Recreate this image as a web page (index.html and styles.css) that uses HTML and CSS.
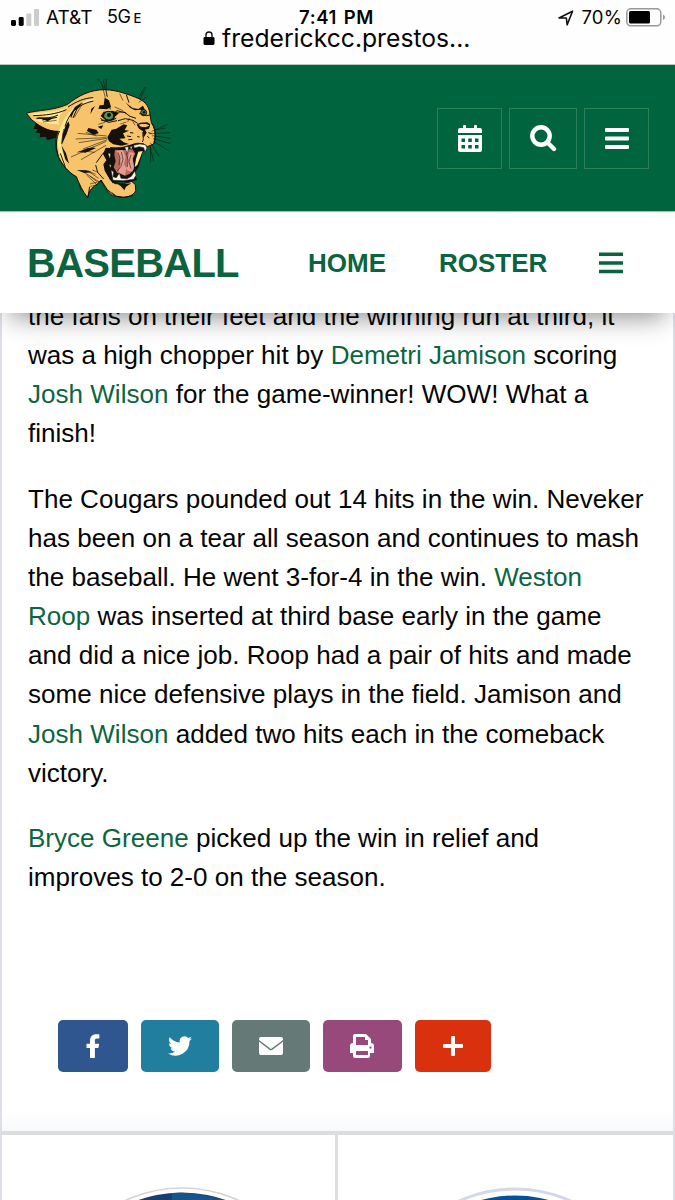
FILE: index.html
```html
<!DOCTYPE html>
<html lang="en">
<head>
<meta charset="utf-8">
<title>Frederick CC Baseball</title>
<link rel="stylesheet" href="styles.css">
</head>
<body>
<div class="screen">
  <div class="phone-bar">
    <div class="status">
      <div class="carrier">
        <svg class="signal" viewBox="0 0 28 18"><rect x="0" y="11" width="5" height="6" rx="1.4"/><rect x="7.7" y="8" width="5" height="9" rx="1.4"/><rect class="weak" x="15.3" y="4.5" width="5" height="12.5" rx="1"/><rect class="weak" x="23" y="0" width="5" height="17" rx="1"/></svg>
        <span class="carrier-name">AT&amp;T</span><span class="network">5G<small>E</small></span>
      </div>
      <div class="clock">7:41 PM</div>
      <div class="power">
        <svg class="locate" viewBox="0 0 16 16"><path d="M1 8 14.5 1.2 9.2 14.8 8.3 8Z"/></svg>
        <span class="percent">70%</span>
        <svg class="battery" viewBox="0 0 40 19"><rect class="shell" x=".8" y=".8" width="34" height="17" rx="4"/><rect x="3" y="3" width="21" height="12.6" rx="1.5"/><path class="cap" d="M37 6.500c2.600 1.200 2.600 4.400 0 5.600z"/></svg>
      </div>
    </div>
    <div class="address">
      <svg class="lock" viewBox="0 0 12 14"><rect x=".5" y="6" width="11" height="8" rx="1.4"/><path d="M3 6V4a3 3 0 0 1 6 0v2"/></svg>
      <span>frederickcc.prestos...</span>
    </div>
  </div>

  <header class="site-header">
    <svg class="cougar" viewBox="0 0 510 420" role="img" aria-label="Cougar">
      <path class="ink" d="M62 160 56 176 68 178 62 188 76 190 74 202 92 200 96 211 128 202 134 184 110 150Z"/>
      <path class="fur" d="M34 130C70 119 112 123 158 103 190 77 225 59 270 59 306 60 342 74 362 82 388 91 402 108 404 128L409 158C421 172 424 200 416 222L397 230 385 221 355 224 330 234 289 234 266 248 278 270 274 292 285 328 300 341 326 341 350 334 361 344 362 362C356 376 340 382 322 382 302 380 294 377 286 372 274 360 263 344 258 330 246 348 224 348 218 383 202 363 193 342 184 320 160 307 142 285 130 260L122 230 124 198 130 184C95 185 66 163 49 148Z"/>
      <path class="cream" d="M38 131C80 126 130 128 166 107 146 119 126 135 132 164 112 160 80 162 49 146L90 150 126 146Z"/>
      <path class="cream" d="M236 85C180 98 145 135 130 192 124 240 138 274 157 294 139 245 133 210 153 170 168 126 190 104 236 91Z"/>
      <path class="line" d="M130 260C122 230 122 205 134 183M159 111C184 95 207 84 235 83M235 93C188 103 162 129 150 169M55 137C92 136 125 132 154 119M64 146C94 143 112 144 129 135M82 150 126 142M136 250 151 290M190 107 174 144"/>
      <path class="thin" d="M204 99 178 142M146 177 139 222M158 178 152 196M84 156 125 151"/>
      <path class="ink" d="M180 111 203 96 191 114 178 122 168 145 165 134ZM151 169 160 154 164 166 151 200 140 225 143 192ZM139 226 153 250 162 281 151 268ZM64 141 98 145 119 142 98 154ZM240 108 226 133 229 116ZM269 83 282 91 288 111 276 118 250 116 254 106 266 105ZM331 96 340 104 353 114 370 117 384 107 394 128 378 119 360 121 345 113ZM257 138 266 125 292 122 312 129 300 140 297 150 274 153Z"/>
      <ellipse class="eye" cx="281" cy="137" rx="15" ry="13"/>
      <ellipse class="eye" cx="386" cy="128" rx="9" ry="9"/>
      <circle class="ink" cx="282" cy="135" r="6"/><circle class="ink" cx="387" cy="127" r="4"/>
      <path class="line" d="M256 145C274 160 291 150 304 145M258 150 282 157 306 152M373 130 394 137 405 135M294 133 306 122 333 129M326 125 345 139 363 145M309 152 331 146 354 151 368 160M276 88 286 118M334 74 342 98"/>
      <path class="thin" d="M301 129 325 126M316 162 334 156M343 144 338 156M352 151 360 166M314 71 324 92M299 111 324 122M270 157 250 163"/>
      <path class="ink" d="M277 202 290 179 304 176 326 163 337 166 329 180 342 182 324 190 331 205 313 206 326 217 342 222 319 227 295 223 282 214ZM365 164 375 158 397 157 406 163 402 176 390 179 395 188 385 204 384 184 372 176Z"/>
      <path class="fur" d="M368 164C382 157 401 161 405 166 399 173 386 175 377 171Z"/>
      <path class="line" d="M285 233C316 238 338 228 357 222 374 216 392 224 396 233M384 186C381 198 389 205 382 216M410 160C424 177 421 210 417 221M336 198 348 200M340 209 352 208M345 188 355 189M397 199 403 204M400 188 410 191M367 200 374 201"/>
      <path class="ink" d="M272 233 294 235 315 234 338 227 373 219 396 228 393 244 384 245 371 291 359 309 366 329 346 337 316 337 293 340 280 321 269 302 265 283 274 271 264 252Z"/>
      <path class="mouth" d="M300 239 326 241 352 237 361 251 353 266 357 297 345 311 330 317 306 308 296 292 302 274 298 255Z"/>
      <path class="tongue" d="M304 243 324 240 332 261 327 282 337 302 352 305 357 290 353 266 357 248 342 247 330 316 310 306 317 282 313 259Z"/>
      <path class="thin" d="M319 246 324 267 318 289 306 304M309 247 315 264 312 286M334 249 339 270 337 291M348 254 342 275 348 296"/>
      <path class="cream" d="M370 245 383 243 367 285 359 291 363 267Z"/>
      <path class="tooth" d="M329 231 341 230 337 251ZM344 230 352 229 350 239ZM356 226 374 222 391 224 396 233 390 247 386 233 373 230 358 234ZM279 249 287 251 284 267ZM288 300 296 306 294 320 304 323 313 309 318 325 336 326 349 319 359 303 363 316 356 328 324 332 294 331ZM282 283 289 286 286 294Z"/>
      <path class="line" d="M264 250 244 278M242 285 248 307 266 327M258 330 277 359 301 378 326 382 353 377M219 381 224 350"/>
      <path class="thin" d="M193 343 198 362M218 302 242 313M207 307 255 337M220 304 251 325M215 315 243 342M224 318 245 334M225 342 259 333M226 349 247 345M132 264C145 292 169 314 185 321"/>
      <path class="ink" d="M185 300 214 301 230 307 208 309ZM190 246 219 234 244 234 211 248ZM220 174 244 179 251 189 234 194 216 182ZM248 170 265 166 259 177ZM304 340 324 342 349 340 333 350 328 361 317 348Z"/>
      <path class="thin" d="M269 55 249 27M271 83 259 36M275 79 273 27M278 81 264 31M370 86 388 52M375 88 393 51M371 97 399 79M188 190 276 198M182 207 274 203M191 218 277 205M168 261 274 214M198 269 273 226M204 237 277 209M187 247 239 230M212 187 245 198M216 182 242 194M220 178 248 190M409 191 465 188M410 184 458 163M411 197 466 205M414 206 466 220M415 214 461 242M406 218 432 258M404 226 416 274M406 228 407 277M419 180 451 174M208 243 239 247M232 300 250 307M291 368 302 376"/>
    </svg>
    <nav class="tools">
      <a class="tool"><svg viewBox="0 0 24 28"><path class="solid" fill-rule="evenodd" d="M5 3V1Q5 0 6 0h1q1 0 1 1v2h8V1q0-1 1-1h1q1 0 1 1v2h3q2 0 2 2v3H0V5q0-2 2-2ZM0 10h24v15q0 2-2 2H2q-2 0-2-2ZM3.5 13.5v3.5h3.5v-3.5ZM10.2 13.5v3.5h3.6v-3.5ZM17 13.5v3.5h3.5v-3.5ZM3.5 20v3.5h3.5V20ZM10.2 20v3.5h3.6V20ZM17 20v3.5h3.5V20Z"/></svg></a>
      <a class="tool tool-search"><svg viewBox="0 0 27 28"><circle cx="11" cy="11" r="8.700"/><path d="m17.500 17.500 6.500 6.500"/></svg></a>
      <a class="tool"><svg viewBox="0 0 24 28"><path class="solid" d="M1 3h22q1 0 1 1v2q0 1-1 1H1Q0 7 0 6V4q0-1 1-1ZM1 11.500h22q1 0 1 1v2q0 1-1 1H1q-1 0-1-1v-2q0-1 1-1ZM1 20h22q1 0 1 1v2q0 1-1 1H1q-1 0-1-1v-2q0-1 1-1Z"/></svg></a>
    </nav>
  </header>

  <nav class="sport-nav">
    <h1>BASEBALL</h1>
    <a class="home">HOME</a>
    <a class="roster">ROSTER</a>
    <svg class="bars" viewBox="0 0 24 22"><path d="M0 .5h24v3.500H0ZM0 9.200h24v3.500H0ZM0 17.800h24v3.500H0Z"/></svg>
  </nav>

  <main class="article">
    <p>the fans on their feet and the winning run at third, it<br>was a high chopper hit by <a>Demetri Jamison</a> scoring<br><a>Josh Wilson</a> for the game-winner! WOW! What a<br>finish!</p>
    <p>The Cougars pounded out 14 hits in the win. Neveker<br>has been on a tear all season and continues to mash<br>the baseball. He went 3-for-4 in the win. <a>Weston</a><br><a>Roop</a> was inserted at third base early in the game<br>and did a nice job. Roop had a pair of hits and made<br>some nice defensive plays in the field. Jamison and<br><a>Josh Wilson</a> added two hits each in the comeback<br>victory.</p>
    <p><a>Bryce Greene</a> picked up the win in relief and<br>improves to 2-0 on the season.</p>
    <div class="share">
      <a class="facebook"><svg viewBox="0 0 24 24"><path d="M9 24V14H5.500v-4.200H9V7c0-4.300 2.200-6.800 6.300-6.800h3v4.300h-2.200c-1.700 0-2.200.8-2.200 2.300v3h4.200l-.7 4.200h-3.500v10Z"/></svg></a>
      <a class="twitter"><svg viewBox="0 0 24 24"><path d="M24 4.600a10 10 0 0 1-2.800.8 5 5 0 0 0 2.100-2.700 10 10 0 0 1-3.100 1.200A4.900 4.900 0 0 0 11.800 8.400 14 14 0 0 1 1.700 3.200a4.900 4.900 0 0 0 1.500 6.600A5 5 0 0 1 1 9.200a4.900 4.900 0 0 0 3.900 4.900 5 5 0 0 1-2.200.1 4.900 4.900 0 0 0 4.600 3.400A10 10 0 0 1 0 19.500a14 14 0 0 0 21.500-12.400A10 10 0 0 0 24 4.600Z"/></svg></a>
      <a class="email"><svg viewBox="0 0 24 24"><path d="M2 3h20q2 0 2 2v1l-12 9L0 6V5q0-2 2-2ZM0 7.800l10.500 7.900q1.500 1 3 0L24 7.800V19q0 2-2 2H2q-2 0-2-2Z"/></svg></a>
      <a class="print"><svg viewBox="0 0 24 24"><path fill-rule="evenodd" d="M3 9V2q0-2 2-2h11l5 5v4q3 0 3 3v7h-4v3q0 2-2 2H5q-2 0-2-2v-3H0v-7q0-3 3-3Zm3 2h12V6h-3V3H6Zm0 10h12v-4H6Zm13.500-8.500v2h2v-2Z"/></svg></a>
      <a class="more"><svg viewBox="0 0 24 24"><path d="M11 2h2q1 0 1 1v7h7q1 0 1 1v2q0 1-1 1h-7v7q0 1-1 1h-2q-1 0-1-1v-7H3q-1 0-1-1v-2q0-1 1-1h7V3q0-1 1-1Z"/></svg></a>
    </div>
  </main>

  <footer class="schools">
    <div class="school"><svg viewBox="0 0 334 66"><circle class="ring" cx="180" cy="188" r="135"/><circle class="disc" cx="180" cy="188" r="130.500"/><path class="highlight" d="M170 58q26-2 60 10H170Z"/></svg></div>
    <div class="school"><svg viewBox="0 0 334 66"><circle class="ring blue-ring" cx="177" cy="189" r="135"/><circle class="disc bright" cx="177" cy="189" r="128.500"/></svg></div>
  </footer>
</div>
</body>
</html>
```
FILE: styles.css
```css
* { box-sizing: border-box; }
body { margin: 0; background: #fff; color: #050505; font-family: "Liberation Sans", Arial, sans-serif; }
.screen { width: 675px; height: 1200px; overflow: hidden; display: flex; flex-direction: column; }

.phone-bar { height: 65px; flex: none; padding-top: 7px; font-family: Inter, sans-serif; border-bottom: 1px solid #b7c8bf; background: #fefefe; }
.status { display: grid; grid-template-columns: 1fr auto 1fr; height: 19px; align-items: center; padding: 0 9px 0 11px; line-height: 19px; font-size: 19px; }
.carrier, .power { display: flex; align-items: center; }
.signal { width: 28px; height: 18px; margin-right: 7px; }
.weak { fill: #ccc; }
.carrier-name { font-size: 19px; width: 61px; letter-spacing: 0; }
.network { font-size: 18px; letter-spacing: -.5px; }
.network small { font-size: 13px; margin-left: 3px; font-weight: 500; }
.clock { font-weight: 600; font-size: 18.5px; letter-spacing: .6px; word-spacing: 1.5px; margin-right: 4px; }
.power { justify-content: flex-end; }
.locate { width: 16px; height: 16px; margin-right: 7px; fill: none; stroke: #111; stroke-width: 1.6; stroke-linejoin: round; }
.percent { font-size: 18.5px; letter-spacing: .2px; margin-right: 4px; }
.battery { width: 40px; height: 19px; }
.shell { fill: none; stroke: #999; stroke-width: 1.5; }
.cap { fill: #999; }
.address { display: flex; align-items: center; height: 24px; padding-left: 203px; font-size: 24.7px; line-height: 24px; white-space: nowrap; }
.lock { width: 12px; height: 14px; margin-right: 7px; }
.lock path { fill: none; stroke: #111; stroke-width: 1.4; }

.site-header { height: 147px; flex: none; display: flex; justify-content: space-between; padding: 5px 26px 0 15px; background: #00653e; border-bottom: 1px solid #9ec3b1; }
.cougar { width: 170px; height: 140px; }
.fur { fill: #f8c46b; stroke: #15100a; stroke-width: 3; }
.cream { fill: #ffe995; }
.ink { fill: #15100a; }
.line, .thin { fill: none; stroke: #15100a; stroke-width: 3; stroke-linejoin: round; }
.thin { stroke-width: 1.7; }
.eye { fill: #549064; stroke: #15100a; stroke-width: 3; }
.mouth { fill: #b76c61; }
.tongue { fill: #e79c91; }
.tooth { fill: #f4f5ee; stroke: #15100a; stroke-width: 1.5; }
.tools { display: flex; gap: 7px; margin-top: 38px; height: 61px; }
.tool { width: 65px; border: 1px solid #2b8058; display: flex; align-items: center; justify-content: center; }
.tool-search { width: 68px; }
.tool svg { width: 24px; height: 28px; }
.tool-search svg { width: 27px; }
.tool .solid { fill: #fff; }
.tool-search circle, .tool-search path { fill: none; stroke: #fff; stroke-width: 4.4; stroke-linecap: round; }

.sport-nav { height: 101px; flex: none; display: flex; align-items: center; padding: 1px 0 0 27px; background: linear-gradient(#f8faf9, #fff 8px); color: #0b6340; position: relative; z-index: 1; box-shadow: 0 14px 24px -10px rgb(0 0 0 / .45); font-weight: 700; }
.sport-nav h1 { margin: 0; width: 281px; font-size: 40px; line-height: 40px; letter-spacing: -.75px; }
.sport-nav a { font-size: 26px; }
.home { width: 131px; }
.roster { width: 160px; }
.bars { width: 24px; height: 22px; fill: #0b6340; }

.article { height: 834px; flex: none; margin-top: -16px; padding: 0 26px; border: 0 solid #dedfe6; border-width: 0 2px; background: linear-gradient(#fff 812px, #f8f9fa); }
.article p { margin: 0 0 26px; font-size: 26.06px; line-height: 39.150px; white-space: nowrap; }
.article a { color: #0c6541; }
.share { display: flex; gap: 13px; margin: 122.5px 0 0 30px; }
.share a { width: 78.200px; height: 52px; border-radius: 5px; display: flex; align-items: center; justify-content: center; }
.share svg { width: 24px; height: 24px; fill: #fff; }
.share .facebook { width: 70px; background: #2f568f; }
.share .twitter { background: #217e9f; }
.share .email { background: #657976; }
.share .print { background: #96497a; }
.share .more { width: 76px; background: #d9300e; }

.schools { height: 70px; flex: none; border-top: 4px solid #dbdddf; border-left: 2px solid #dedfe6; border-right: 2px solid #dedfe6; display: grid; grid-template-columns: 336px 1fr; }
.school:first-child { border-right: 3px solid #dcdedf; }
.school svg { display: block; width: 334px; height: 66px; }
.ring { fill: #fff; stroke: #d8d2d3; stroke-width: 1.500; }
.blue-ring { stroke: #d4d8e9; stroke-width: 3; }
.disc { fill: #183f70; }
.highlight { fill: #17548b; }
.bright { fill: #07519a; }
```
